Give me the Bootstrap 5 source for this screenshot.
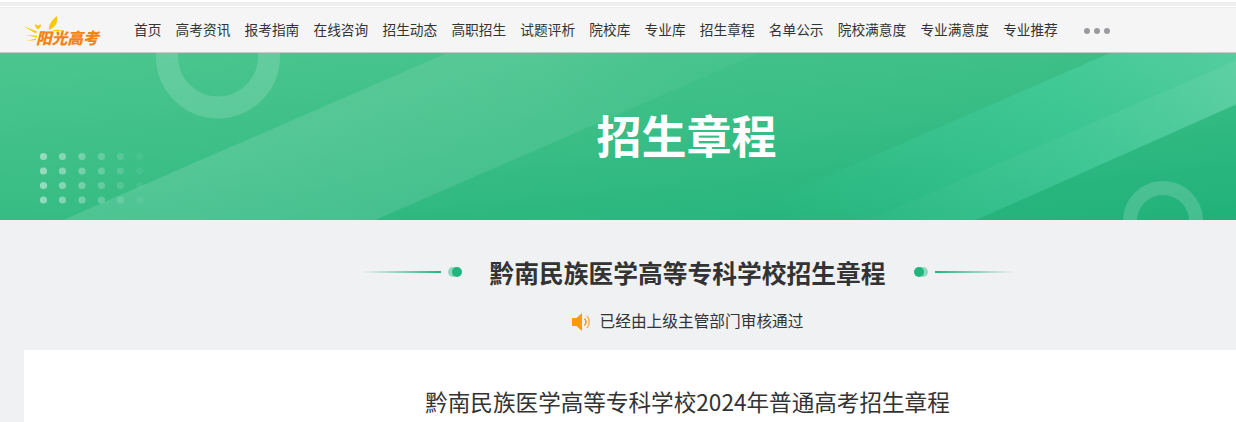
<!DOCTYPE html>
<html lang="zh-CN">
<head>
<meta charset="utf-8">
<title>招生章程</title>
<link href="https://cdn.jsdelivr.net/npm/bootstrap@5.3.0/dist/css/bootstrap.min.css" rel="stylesheet">
<style>
html,body{height:422px;overflow:hidden;background:#f0f1f3;}
body{font-family:"Liberation Sans","Noto Sans CJK SC",sans-serif;color:#333;}
.page-wrap{width:1375px;}
.top-strip{height:8px;background:linear-gradient(#fff 0 2px,#efefef 2px 6px,#fff 6px 7px,#ececec 7px 8px);}
.site-head{height:45px;background:#f5f5f5;border-bottom:1px solid #c9c9c9;}
.logo-box{width:134px;height:44px;flex:none;position:relative;}
.logo-rays{position:absolute;left:21px;top:7px;}
.logo-text{position:absolute;left:36px;top:20px;font:italic 900 15.7px/20px "Noto Sans CJK SC",sans-serif;color:#f5830f;white-space:nowrap;}
.nav-links{gap:14.2px;font-size:13.7px;line-height:44px;color:#333;padding-top:2px;}
.nav-links a{color:#333;text-decoration:none;white-space:nowrap;}
.more-dots{margin-left:12.5px;gap:4px;}
.more-dots i{display:block;width:6px;height:6px;border-radius:50%;background:#9a9a9f;}
.hero{height:167px;position:relative;overflow:hidden;background:linear-gradient(174deg,#4cc68f 0%,#3abe86 45%,#1db078 100%);}
.hero-art{position:absolute;left:0;top:0;}
.hero-title{position:relative;height:167px;padding-right:2px;font:700 45px/163px "Noto Sans CJK SC",sans-serif;color:#fff;text-align:center;margin:0;}
.sec-head{height:103px;padding-top:34px;}
.sec-title{font:700 24.75px/36px "Noto Sans CJK SC",sans-serif;color:#333;margin:0;white-space:nowrap;width:396px;text-align:center;}
.deco-line{width:80px;height:2px;background:linear-gradient(90deg,rgba(30,180,125,0),#1fb57d);}
.deco-line.flip{transform:scaleX(-1);}
.deco-dots{width:14px;height:10px;position:relative;margin:0 7px;}
.deco-dots::before{content:"";position:absolute;left:0;top:0;width:10px;height:10px;border-radius:50%;background:#8fd8bb;}
.deco-dots::after{content:"";position:absolute;left:4px;top:0;width:10px;height:10px;border-radius:50%;background:#1fb57d;}
.deco-dots.flip{transform:scaleX(-1);}
.heading-row{gap:21px;}
.audit-line{height:24px;margin-top:-13px;font-size:15.7px;line-height:24px;color:#333;gap:9px;}
.white-panel{margin:16px 24px 0;background:#fff;height:200px;padding-top:34px;}
.doc-title{font:400 22.6px/36px "Noto Sans CJK SC",sans-serif;color:#333;text-align:center;margin:0;}
</style>
</head>
<body>
<div class="page-wrap">
  <div class="top-strip"></div>
  <header class="site-head d-flex align-items-center">
    <div class="logo-box">
      <svg class="logo-rays" width="42" height="30" viewBox="0 0 42 30" aria-hidden="true">
        <path d="M28 15C27 9 32 4 36 1C37 7 35 12 28 15Z" fill="#fbc80a"/>
        <path d="M17 14.500C15 13 14 11.500 14 9.500C15.500 9.500 16.500 10 17 11C17.500 10 18.500 9.500 20 9.500C20 11.500 19 13 17 14.500Z" fill="#fbc80a"/>
        <path d="M2 11L16 16.500L15 18.500Z M4 20L16 20.800V22.500Z M5 26L15 23.500V25Z" fill="#fbc80a"/>
        <path d="M31 15.500C34 14.500 38 14.500 41 15.500C38 16.500 34 16.500 31 15.500Z" fill="#fbc80a"/>
      </svg>
      <span class="logo-text">阳光高考</span>
    </div>
    <nav class="nav-links d-flex align-items-center">
      <a href="#">首页</a><a href="#">高考资讯</a><a href="#">报考指南</a><a href="#">在线咨询</a><a href="#">招生动态</a><a href="#">高职招生</a><a href="#">试题评析</a><a href="#">院校库</a><a href="#">专业库</a><a href="#">招生章程</a><a href="#">名单公示</a><a href="#">院校满意度</a><a href="#">专业满意度</a><a href="#">专业推荐</a>
      <span class="more-dots d-flex"><i></i><i></i><i></i></span>
    </nav>
  </header>
  <section class="hero">
    <svg class="hero-art" width="1375" height="167" viewBox="0 0 1375 167" aria-hidden="true">
      <defs>
        <linearGradient id="bandA" gradientUnits="userSpaceOnUse" x1="200" y1="167" x2="700" y2="0"><stop offset="0" stop-color="#fff" stop-opacity=".13"/><stop offset=".7" stop-color="#fff" stop-opacity=".08"/><stop offset="1" stop-color="#fff" stop-opacity=".03"/></linearGradient>
        <linearGradient id="bandB" gradientUnits="userSpaceOnUse" x1="780" y1="167" x2="1300" y2="0"><stop offset="0" stop-color="#4fe0b8" stop-opacity="0"/><stop offset=".55" stop-color="#4fe0b8" stop-opacity=".3"/><stop offset="1" stop-color="#8fe8c8" stop-opacity=".4"/></linearGradient>
        <linearGradient id="bandC" gradientUnits="userSpaceOnUse" x1="880" y1="167" x2="1300" y2="0"><stop offset="0" stop-color="#fff" stop-opacity=".02"/><stop offset="1" stop-color="#fff" stop-opacity=".07"/></linearGradient>
        <linearGradient id="dotFade" gradientUnits="userSpaceOnUse" x1="40" y1="0" x2="144" y2="0"><stop offset="0" stop-color="#fff" stop-opacity=".46"/><stop offset="1" stop-color="#fff" stop-opacity=".04"/></linearGradient>
      </defs>
      <path d="M63 167L447 0H759L375 167Z" fill="url(#bandA)"/>
      <path d="M726 167L1110 0H1352L976 167Z" fill="url(#bandB)"/>
      <path d="M869 167L1253 0H1352L976 167Z" fill="url(#bandC)"/>
      <circle cx="218" cy="3.500" r="51" fill="none" stroke="#fff" stroke-opacity=".15" stroke-width="22"/>
      <circle cx="1163" cy="168" r="33" fill="none" stroke="#fff" stroke-opacity=".17" stroke-width="14"/>
      <g fill="url(#dotFade)">
        <circle cx="43.500" cy="103.500" r="3.600"/><circle cx="62.500" cy="103.500" r="3.600"/><circle cx="82" cy="103.500" r="3.600"/><circle cx="101.500" cy="103.500" r="3.600"/><circle cx="120.500" cy="103.500" r="3.600"/><circle cx="140" cy="103.500" r="3.600"/>
        <circle cx="43.500" cy="118" r="3.600"/><circle cx="62.500" cy="118" r="3.600"/><circle cx="82" cy="118" r="3.600"/><circle cx="101.500" cy="118" r="3.600"/><circle cx="120.500" cy="118" r="3.600"/><circle cx="140" cy="118" r="3.600"/>
        <circle cx="43.500" cy="132.500" r="3.600"/><circle cx="62.500" cy="132.500" r="3.600"/><circle cx="82" cy="132.500" r="3.600"/><circle cx="101.500" cy="132.500" r="3.600"/><circle cx="120.500" cy="132.500" r="3.600"/><circle cx="140" cy="132.500" r="3.600"/>
        <circle cx="43.500" cy="147" r="3.600"/><circle cx="62.500" cy="147" r="3.600"/><circle cx="82" cy="147" r="3.600"/><circle cx="101.500" cy="147" r="3.600"/><circle cx="120.500" cy="147" r="3.600"/><circle cx="140" cy="147" r="3.600"/>
      </g>
    </svg>
    <h1 class="hero-title">招生章程</h1>
  </section>
  <section class="sec-head d-flex justify-content-center align-items-start">
    <div class="heading-row d-flex align-items-center justify-content-center">
      <div class="d-flex align-items-center"><div class="deco-line"></div><div class="deco-dots"></div></div>
      <h2 class="sec-title">黔南民族医学高等专科学校招生章程</h2>
      <div class="d-flex align-items-center"><div class="deco-dots flip"></div><div class="deco-line flip"></div></div>
    </div>
  </section>
  <div class="audit-line d-flex justify-content-center align-items-center">
    <svg width="19" height="20" viewBox="0 0 19 20" aria-hidden="true"><path d="M0 6.500C0 6 .5 6 1 6H4.500L10 1V19L4.500 14H1C.5 14 0 14 0 13.500Z" fill="#fa9a0c"/><path d="M12.500 6.500C14.200 8.500 14.200 11.500 12.500 13.500" fill="none" stroke="#fa9a0c" stroke-width="1.500"/><path d="M15 4C18 7.500 18 12.500 15 16" fill="none" stroke="#fbb450" stroke-width="1.500"/></svg>
    <span>已经由上级主管部门审核通过</span>
  </div>
  <main class="white-panel">
    <h3 class="doc-title">黔南民族医学高等专科学校2024年普通高考招生章程</h3>
  </main>
</div>
</body>
</html>
